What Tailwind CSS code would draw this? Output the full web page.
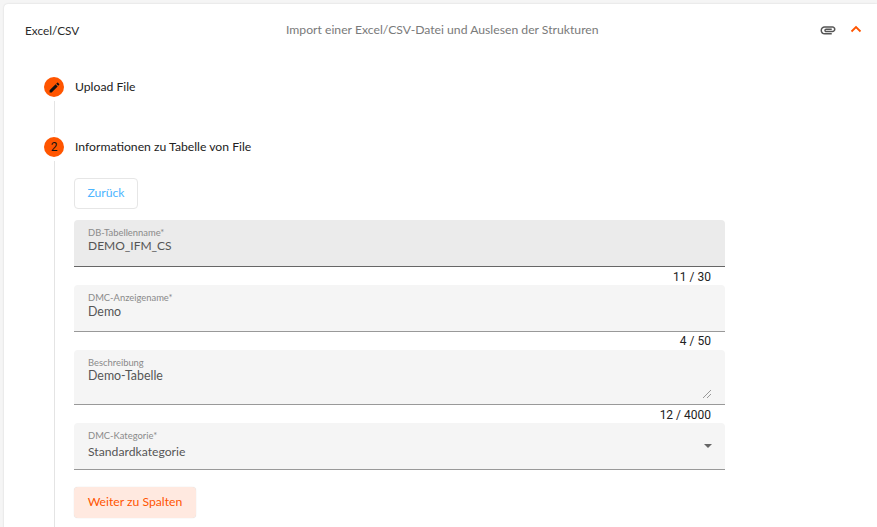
<!DOCTYPE html>
<html><head><meta charset="utf-8"><script src="https://cdn.jsdelivr.net/npm/@tailwindcss/browser@4"></script></head>
<body class="bg-[#f5f5f5] font-['Lato',sans-serif] overflow-hidden">
<div class="w-[877px] h-[527px] overflow-hidden pl-[4px] pt-[4px]">
<div class="bg-white rounded-tl-[4px] shadow-[0_0_2px_rgba(0,0,0,0.15)] h-[600px] relative">
  <div class="flex items-center h-[52px] pl-[21px] pr-[15px] text-[12.2px] pt-[1px]">
    <div class="w-[261px] text-[#2b2b2b] text-[11.8px]">Excel/CSV</div>
    <div class="text-[#7a7a7a]">Import einer Excel/CSV-Datei und Auslesen der Strukturen</div>
    <div class="ml-auto flex items-center gap-[13px] -mt-[1px]">
      <svg width="18" height="18" viewBox="0 0 24 24" fill="#555"><path d="M2 12.5C2 9.46 4.46 7 7.5 7H18c2.21 0 4 1.79 4 4s-1.790 4-4 4H9.500C8.120 15 7 13.880 7 12.500S8.120 10 9.500 10H17v2H9.410c-.550 0-.550 1 0 1H18c1.100 0 2-.900 2-2s-.900-2-2-2H7.500C5.570 9 4 10.570 4 12.500S5.570 16 7.500 16H17v2H7.500C4.460 18 2 15.540 2 12.500z"/></svg>
      <svg class="-mt-[3px]" width="12" height="8" viewBox="0 0 12 8" fill="none" stroke="#ff5500" stroke-width="1.8"><path d="M1.500 6.500 6 2l4.500 4.500"/></svg>
    </div>
  </div>
  <div class="pl-[40px] pt-[21px]">
    <div class="flex items-center h-[20px] gap-[11px]">
      <div class="w-[20px] h-[20px] rounded-full bg-[#ff5500] flex items-center justify-center">
        <svg width="13" height="13" viewBox="0 0 24 24" fill="#111"><path d="M3 17.250V21h3.750L17.810 9.940l-3.750-3.750L3 17.250zM20.710 7.040a1 1 0 0 0 0-1.410l-2.340-2.340a1 1 0 0 0-1.410 0l-1.830 1.830 3.750 3.750 1.830-1.830z"/></svg>
      </div>
      <div class="text-[12.2px] text-[#222]">Upload File</div>
    </div>
    <div class="ml-[10px] my-[4px] w-px h-[32px] bg-[#e4e4e4]"></div>
    <div class="flex items-center h-[20px] gap-[11px]">
      <div class="w-[20px] h-[20px] rounded-full bg-[#ff5500] flex items-center justify-center text-[12px] text-[#111] font-['Roboto',sans-serif]">2</div>
      <div class="text-[12.2px] text-[#222]">Informationen zu Tabelle von File</div>
    </div>
    <div class="ml-[10px] mt-[4px] pl-[19px] border-l border-[#e4e4e4] w-[671px] pt-[17px] h-[400px]">
      <button class="block h-[31px] w-[64px] border border-[#e6e6e6] rounded-[4px] text-[12.2px] text-[#4db5ff] bg-white">Zurück</button>
      <div class="mt-[11px] h-[47px] bg-[#ebebeb] rounded-t-[4px] border-b border-[#666] px-[14px] pt-[8px]">
        <div class="text-[9.4px] leading-[10px] text-[#8a8a8a]">DB-Tabellenname*</div>
        <div class="text-[12px] leading-[16px] text-[#555]">DEMO_IFM_CS</div>
      </div>
      <div class="h-[18px] pr-[14px] text-right text-[12px] leading-[20px] text-[#222] font-['Roboto',sans-serif]">11 / 30</div>
      <div class="h-[47px] bg-[#f5f5f5] rounded-t-[4px] border-b border-[#999] px-[14px] pt-[8px]">
        <div class="text-[9.4px] leading-[10px] text-[#8a8a8a]">DMC-Anzeigename*</div>
        <div class="text-[12.4px] leading-[17px] text-[#555]">Demo</div>
      </div>
      <div class="h-[18px] pr-[14px] text-right text-[12px] leading-[19px] text-[#222] font-['Roboto',sans-serif]">4 / 50</div>
      <div class="relative h-[55px] bg-[#f5f5f5] rounded-t-[4px] border-b border-[#999] px-[14px] pt-[8px]">
        <div class="text-[9.4px] leading-[10px] text-[#8a8a8a]">Beschreibung</div>
        <div class="text-[12.4px] leading-[16px] text-[#555]">Demo-Tabelle</div>
        <svg class="absolute right-[14px] bottom-[6px]" width="8" height="8" viewBox="0 0 8 8" stroke="#999" stroke-width="1" fill="none"><path d="M0 8 8 0M4 8 8 4"/></svg>
      </div>
      <div class="h-[18px] pr-[14px] text-right text-[12px] leading-[20px] text-[#222] font-['Roboto',sans-serif]">12 / 4000</div>
      <div class="relative h-[47px] bg-[#f5f5f5] rounded-t-[4px] border-b border-[#999] px-[14px] pt-[8px]">
        <div class="text-[9.4px] leading-[10px] text-[#8a8a8a]">DMC-Kategorie*</div>
        <div class="text-[12.2px] leading-[16px] mt-[3px] text-[#555]">Standardkategorie</div>
        <div class="absolute right-[13px] top-[21px] w-0 h-0 border-x-[4px] border-x-transparent border-t-[4px] border-t-[#666]"></div>
      </div>
      <button class="block mt-[17px] h-[31px] w-[122px] rounded-[4px] text-[12.2px] text-[#ff5500] bg-[#ffe9e0] shadow-[0_0_1px_rgba(0,0,0,0.2)]">Weiter zu Spalten</button>
    </div>
  </div>
</div>
</div>
</body></html>
